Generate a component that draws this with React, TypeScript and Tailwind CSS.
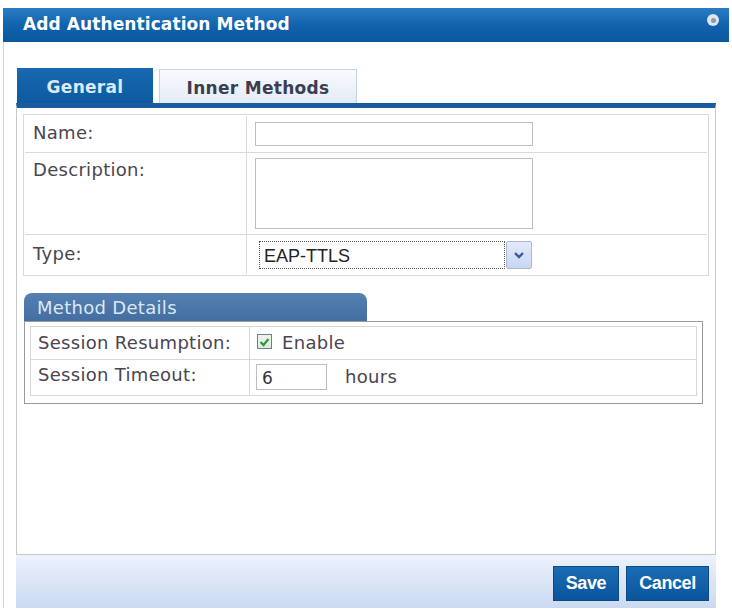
import React from "react";

export default function App() {
  const label = "text-[18px] tracking-[0.3px] leading-[22px] text-[#4a4550]";
  const btnFont = { fontFamily: '"Liberation Sans", Arial, sans-serif' };
  return (
    <div className="w-[732px] h-[615px] bg-white pt-[8px] overflow-hidden" style={{ fontFamily: '"DejaVu Sans", Verdana, sans-serif' }}>
      <div className="ml-[3px] w-[726px] h-[600px] flex flex-col">
        {/* Title bar */}
        <div className="h-[34px] shrink-0 flex items-center justify-between pl-[20px] pr-[10px] bg-gradient-to-b from-[#2a7cc2] via-[#1063ad] to-[#0b579c]">
          <span className="text-white font-bold text-[17px] tracking-[0.1px]">Add Authentication Method</span>
          <span className="self-start mt-[6px] w-[12px] h-[12px] rounded-full bg-[#dfe6ee] flex items-center justify-center">
            <span className="w-[5px] h-[5px] rounded-full bg-[#8e9aa6]" />
          </span>
        </div>
        {/* Body */}
        <div className="flex-1 flex flex-col border-l border-[#d4d4d4] pl-[12px] pr-[13px] pt-[26px]">
          {/* Tabs */}
          <div className="flex items-end h-[35px] gap-[6px] pl-[1px]">
            <div className="w-[136px] h-[35px] bg-gradient-to-b from-[#1869b0] to-[#0d5aa0] flex items-center justify-center pt-[4px]">
              <span className="font-bold text-[17px] tracking-[0.3px] text-[#dce9f6]">General</span>
            </div>
            <div className="w-[198px] h-[34px] border border-[#c5d3e3] border-b-0 bg-gradient-to-b from-[#f9fbfe] to-[#e3ebf6] flex items-center justify-center pt-[4px]">
              <span className="font-bold text-[17px] tracking-[0.3px] text-[#3d3d52]">Inner Methods</span>
            </div>
          </div>
          {/* Panel */}
          <div className="h-[452px] shrink-0 border-t-[5px] border-t-[#1a5c9c] border-x border-x-[#c8c8c8] border-b border-b-[#c8c8c8] px-[6px] pt-[6px]">
            {/* Form table */}
            <div className="border border-[#dadada] p-[1px]">
              <div className="flex h-[37px] border-b border-[#dadada]">
                <div className={`w-[222px] border-r border-[#dadada] pl-[8px] pt-[6px] ${label}`}>Name:</div>
                <div className="flex-1 pl-[8px] pt-[6px]">
                  <div className="w-[278px] h-[24px] border border-[#bdbdbd] bg-white" />
                </div>
              </div>
              <div className="flex h-[82px] border-b border-[#dadada]">
                <div className={`w-[222px] border-r border-[#dadada] pl-[8px] pt-[6px] ${label}`}>Description:</div>
                <div className="flex-1 pl-[8px] pt-[5px]">
                  <div className="w-[278px] h-[71px] border border-[#bdbdbd] bg-white" />
                </div>
              </div>
              <div className="flex h-[39px]">
                <div className={`w-[222px] border-r border-[#dadada] pl-[8px] pt-[8px] ${label}`}>Type:</div>
                <div className="flex-1 pl-[12px] pt-[6px] flex items-start">
                  <div className="w-[246px] h-[28px] border border-dotted border-[#555] bg-white flex items-center pl-[4px]">
                    <span className="text-[18px] text-[#222] pt-[2px]" style={btnFont}>EAP-TTLS</span>
                  </div>
                  <div className="w-[26px] h-[28px] ml-[1px] border border-[#aab8d6] rounded-[2px] bg-gradient-to-b from-[#e3ebfb] to-[#c8d6f2] flex items-center justify-center">
                    <svg width="12" height="8" viewBox="0 0 12 8">
                      <path d="M2 2 L6 6 L10 2" fill="none" stroke="#3a5a9a" strokeWidth="2.4" />
                    </svg>
                  </div>
                </div>
              </div>
            </div>
            {/* Method Details */}
            <div className="mt-[17px]">
              <div className="w-[343px] h-[28px] ml-[1px] rounded-t-[8px] bg-gradient-to-b from-[#5580b0] to-[#426ea2] flex items-end pl-[13px] pb-[2px]">
                <span className="text-[18px] tracking-[0.3px] leading-[22px] text-[#dce7f3]">Method Details</span>
              </div>
              <div className="w-[679px] ml-[1px] border border-[#9a9a9a] px-[5px] pt-[4px] pb-[7px]">
                <div className="border border-[#d8d8d8]">
                  <div className="flex h-[33px] border-b border-[#d8d8d8]">
                    <div className={`w-[219px] border-r border-[#d8d8d8] pl-[7px] pt-[5px] ${label}`}>Session Resumption:</div>
                    <div className="flex-1 pl-[7px] pt-[6px] flex items-start gap-[10px]">
                      <div className="w-[15px] h-[15px] mt-[1px] border border-[#6e7f8e] bg-gradient-to-b from-[#eef4ee] to-[#dfe9df] flex items-center justify-center">
                        <svg width="11" height="10" viewBox="0 0 11 10">
                          <path d="M1.5 5 L4.5 8 L9.5 2" fill="none" stroke="#2c9a3c" strokeWidth="2.2" />
                        </svg>
                      </div>
                      <span className={`${label} -mt-[1px]`}>Enable</span>
                    </div>
                  </div>
                  <div className="flex h-[35px]">
                    <div className={`w-[219px] border-r border-[#d8d8d8] pl-[7px] pt-[4px] ${label}`}>Session Timeout:</div>
                    <div className="flex-1 pl-[6px] pt-[4px] flex items-start gap-[18px]">
                      <div className="w-[71px] h-[26px] border border-[#bdbdbd] bg-white pl-[5px] pt-[1px] text-[17px] text-[#333]">6</div>
                      <span className={`${label} pt-[2px]`}>hours</span>
                    </div>
                  </div>
                </div>
              </div>
            </div>
          </div>
          {/* Footer */}
          <div className="h-[53px] shrink-0 bg-gradient-to-b from-[#edf2fc] via-[#dbe5f6] to-[#cbdaf1] flex items-center justify-end gap-[7px] pr-[7px] pt-[4px]">
            <button className="w-[66px] h-[35px] bg-gradient-to-b from-[#1a6cb5] to-[#0a559c] border border-[#0b4a85] text-white font-bold text-[18px] tracking-[-0.4px]" style={btnFont}>Save</button>
            <button className="w-[83px] h-[35px] bg-gradient-to-b from-[#1a6cb5] to-[#0a559c] border border-[#0b4a85] text-white font-bold text-[18px] tracking-[-0.4px]" style={btnFont}>Cancel</button>
          </div>
        </div>
      </div>
    </div>
  );
}
